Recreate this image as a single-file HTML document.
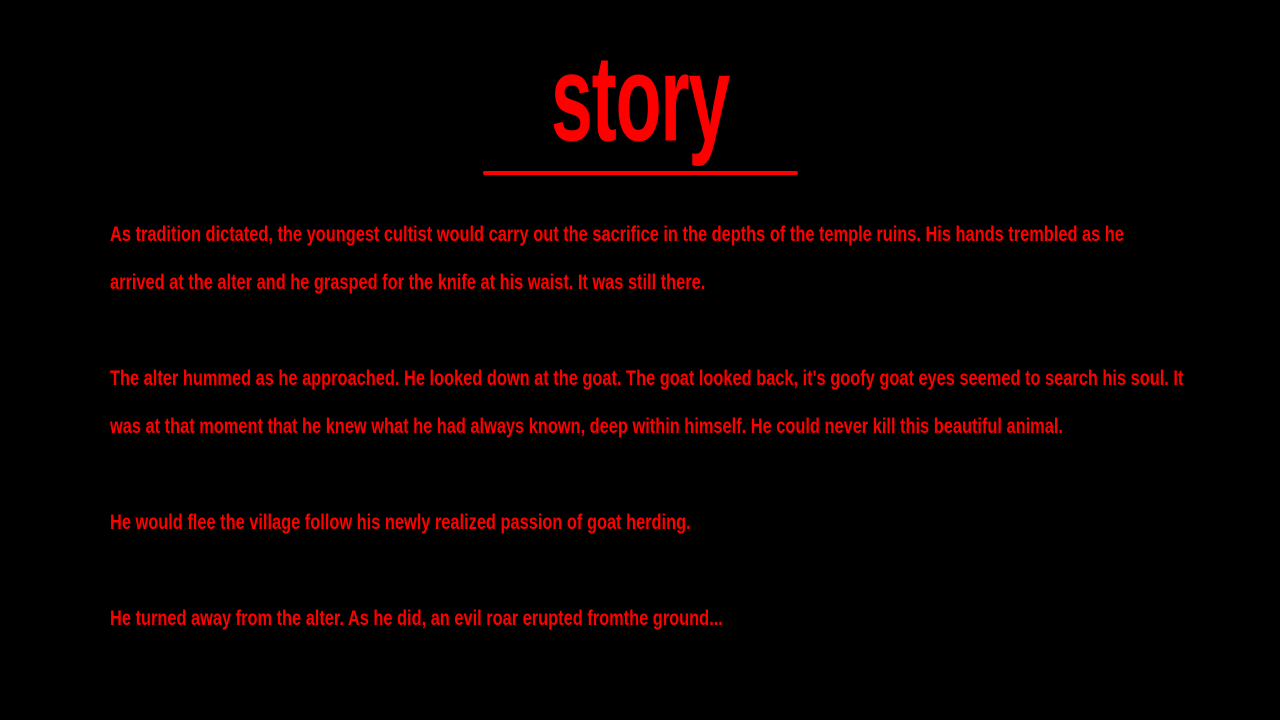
<!DOCTYPE html>
<html><head><meta charset="utf-8"><style>
html,body{margin:0;padding:0;background:#000;width:1280px;height:720px;overflow:hidden}
body{position:relative;font-family:"Liberation Sans",sans-serif;color:#f00;font-weight:bold}
.title{position:absolute;left:0;width:1280px;top:34px;text-align:center;font-size:118px;line-height:130px;letter-spacing:-2px;transform:scale(0.64,1.04);transform-origin:640px 65px}
.rule{position:absolute;left:483px;width:315px;top:171px;height:4px;background:#f00;border-radius:2px}
.l{position:absolute;left:110px;font-size:21px;line-height:24px;white-space:nowrap;letter-spacing:0px;transform:scaleX(0.78);transform-origin:0 0}
</style></head><body>
<div class="title">story</div>
<div class="rule"></div>
<div class="l" style="top:223px">As tradition dictated, the youngest cultist would carry out the sacrifice in the depths of the temple ruins. His hands trembled as he</div>
<div class="l" style="top:271px">arrived at the alter and he grasped for the knife at his waist. It was still there.</div>
<div class="l" style="top:367px">The alter hummed as he approached. He looked down at the goat. The goat looked back, it's goofy goat eyes seemed to search his soul. It</div>
<div class="l" style="top:415px">was at that moment that he knew what he had always known, deep within himself. He could never kill this beautiful animal.</div>
<div class="l" style="top:511px">He would flee the village follow his newly realized passion of goat herding.</div>
<div class="l" style="top:607px">He turned away from the alter. As he did, an evil roar erupted fromthe ground...</div>
</body></html>
